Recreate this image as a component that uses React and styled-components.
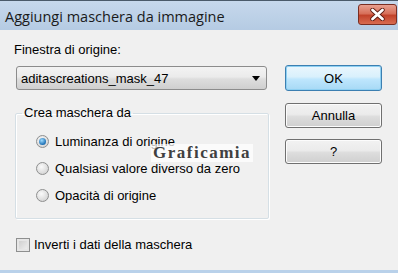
import React from 'react'
import styled, { createGlobalStyle } from 'styled-components'

const Global = createGlobalStyle`
  html, body { margin: 0; padding: 0; background: #f0f0f0; }
  body { font-family: "Liberation Sans", Arial, sans-serif; }
`

const Window = styled.div`
  width: 398px;
  height: 273px;
  display: flex;
  flex-direction: column;
  background: #f0f0f0;
  border-top: 1px solid #4a5a6a;
  border-bottom: 3px solid #b9d1ea;
  box-sizing: border-box;
  position: relative;
`

const TitleBar = styled.div`
  height: 29px;
  display: flex;
  align-items: center;
  justify-content: space-between;
  padding: 0 1px 0 5px;
  background: linear-gradient(#c6d8ec, #b5cbe3);
  box-sizing: border-box;
`

const Title = styled.div`
  font-family: "Open Sans", "Liberation Sans", sans-serif;
  font-size: 14.5px;
  color: #1a1a1a;
  margin-top: 1px;
`

const CloseButton = styled.div`
  width: 39px;
  height: 21px;
  margin-top: -3px;
  border: 1px solid #7a2e22;
  border-radius: 3px;
  box-sizing: border-box;
  background: linear-gradient(#e8a090 0%, #d7705a 45%, #c2432b 55%, #d86b50 100%);
  display: flex;
  align-items: center;
  justify-content: center;
`

const Body = styled.div`
  flex: 1;
  display: grid;
  grid-template-columns: 256px 97px;
  column-gap: 15px;
  padding: 12px 0 0 14px;
`

const Column = styled.div`
  display: flex;
  flex-direction: column;
`

const Label = styled.div`
  font-size: 13px;
  line-height: 16px;
  color: #000;
`

const Combo = styled.div`
  margin: 8px 0 0 2px;
  width: 251px;
  height: 24px;
  box-sizing: border-box;
  border: 1px solid #8c8c8c;
  border-radius: 3px;
  background: linear-gradient(#f3f3f3 0%, #ebebeb 45%, #dddddd 55%, #cfcfcf 100%);
  display: flex;
  align-items: center;
  justify-content: space-between;
  padding: 0 5px 0 4px;
  font-size: 13px;
  color: #000;
`

const Arrow = styled.span`
  width: 0;
  height: 0;
  border-left: 4px solid transparent;
  border-right: 4px solid transparent;
  border-top: 5px solid #000;
  margin-right: 1px;
`

const Group = styled.fieldset`
  margin: 15px 0 0 1px;
  width: 254px;
  height: 114px;
  box-sizing: border-box;
  border: 1px solid #d5dfe5;
  box-shadow: inset 1px 1px 0 #fff, 1px 1px 0 #fff;
  border-radius: 2px;
  padding: 6px 0 0 20px;
  display: flex;
  flex-direction: column;
`

const Legend = styled.legend`
  font-size: 13px;
  line-height: 16px;
  padding: 0 2px;
  margin-left: -14px;
  color: #000;
`

const OptionRow = styled.label`
  display: flex;
  align-items: center;
  height: 27px;
  font-size: 13px;
  color: #000;
  gap: 6px;
  &:first-of-type { margin-top: 1px; }
`

const Radio = styled.span`
  width: 13px;
  height: 13px;
  border-radius: 50%;
  box-sizing: border-box;
  border: 1px solid #8e8f8f;
  background: radial-gradient(circle at 40% 35%, #fafafa, #d4d4d4 80%);
  display: flex;
  align-items: center;
  justify-content: center;
  &::after {
    content: "";
    display: ${(p) => (p.$checked ? 'block' : 'none')};
    width: 7px;
    height: 7px;
    border-radius: 50%;
    background: radial-gradient(circle at 40% 35%, #9fdcff, #1c6fb4 70%, #114a7e);
  }
`

const CheckRow = styled.label`
  display: flex;
  align-items: center;
  margin: 18px 0 0 2px;
  font-size: 13px;
  color: #000;
  gap: 4px;
`

const Check = styled.span`
  width: 14px;
  height: 14px;
  box-sizing: border-box;
  border: 1px solid #8e8f8f;
  background: linear-gradient(135deg, #c9c9c9, #f4f4f4);
  box-shadow: inset 0 0 0 2px #e6e6e6;
`

const Button = styled.div`
  height: ${(p) => p.$h || 25}px;
  margin-top: ${(p) => p.$mt || 0}px;
  box-sizing: border-box;
  border: 1px solid ${(p) => (p.$default ? '#3c7fb1' : '#707070')};
  border-radius: 3px;
  background: ${(p) =>
    p.$default
      ? 'linear-gradient(#eaf6fd 0%, #d9f0fc 45%, #bee6fd 55%, #a7d9f5 100%)'
      : 'linear-gradient(#f2f2f2 0%, #ebebeb 45%, #dddddd 55%, #cfcfcf 100%)'};
  box-shadow: ${(p) => (p.$default ? 'inset 0 0 0 1px #8ed0f2' : 'inset 0 0 0 1px #fcfcfc')};
  display: flex;
  align-items: center;
  justify-content: center;
  font-size: 13px;
  color: #000;
`

const Watermark = styled.div`
  position: absolute;
  left: 151px;
  top: 143px;
  padding: 0 2px;
  font-family: "Liberation Serif", "Times New Roman", serif;
  font-size: 17px;
  font-weight: bold;
  letter-spacing: 1.5px;
  color: #404040;
  background: rgba(255, 255, 255, 0.7);
  line-height: 18px;
`

const options = ['Luminanza di origine', 'Qualsiasi valore diverso da zero', 'Opacità di origine']

const App = () => {
  return (
    <>
      <Global />
      <Window>
        <TitleBar>
          <Title>Aggiungi maschera da immagine</Title>
          <CloseButton>
            <svg width="15" height="13" viewBox="0 0 15 13">
              <path d="M2.5 2 L12.5 11 M12.5 2 L2.5 11" stroke="#5a1a10" strokeWidth="4.4" strokeLinecap="round" />
              <path d="M2.5 2 L12.5 11 M12.5 2 L2.5 11" stroke="#fff" strokeWidth="2.8" strokeLinecap="round" />
            </svg>
          </CloseButton>
        </TitleBar>
        <Body>
          <Column>
            <Label>Finestra di origine:</Label>
            <Combo>
              <span>aditascreations_mask_47</span>
              <Arrow />
            </Combo>
            <Group>
              <Legend>Crea maschera da</Legend>
              {options.map((o, i) => (
                <OptionRow key={o}>
                  <Radio $checked={i === 0} />
                  {o}
                </OptionRow>
              ))}
            </Group>
            <CheckRow>
              <Check />
              Inverti i dati della maschera
            </CheckRow>
          </Column>
          <Column>
            <Button $default $h={26} $mt={23}>OK</Button>
            <Button $mt={12}>Annulla</Button>
            <Button $mt={11}>?</Button>
          </Column>
        </Body>
        <Watermark>Graficamia</Watermark>
      </Window>
    </>
  )
}

export default App
